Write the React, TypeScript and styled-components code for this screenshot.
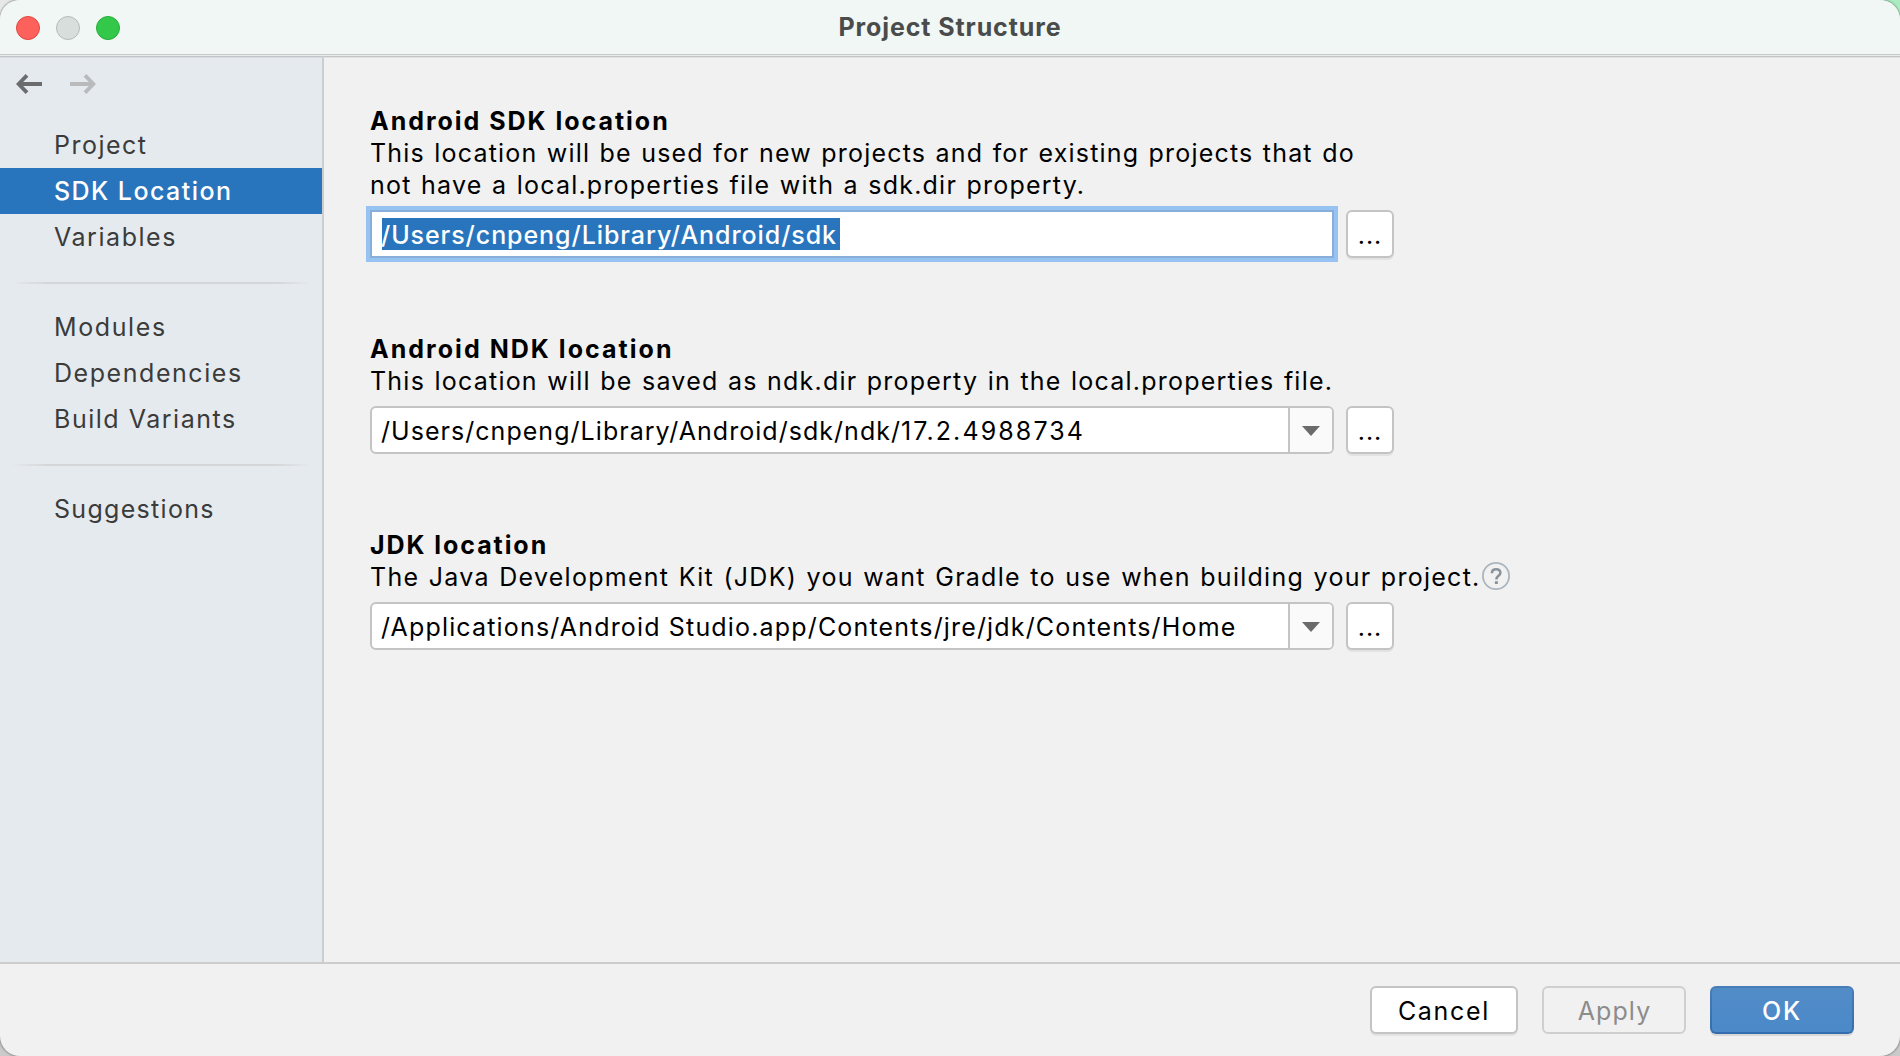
import React from "react";
import styled, { createGlobalStyle, css } from "styled-components";

const GlobalStyle = createGlobalStyle`
  *, *::before, *::after { box-sizing: border-box; }
  html, body { margin: 0; padding: 0; }
  body {
    overflow: hidden;
    background:
      radial-gradient(circle at 100% 0, #a9ecc0 0, #b4edc8 30px, transparent 31px),
      linear-gradient(#e6e8e7 0, #e6e8e7 50%, #cacaca 50%, #cacaca 100%);
  }
`;

const Window = styled.div`
  width: 1900px;
  height: 1056px;
  display: flex;
  flex-direction: column;
  overflow: hidden;
  border-radius: 20px;
  box-shadow: 0 0 2px 1px rgba(0, 0, 0, 0.3);
  background: #f1f1f1;
  color: #000;
  font-family: Inter, "Liberation Sans", sans-serif;
  font-size: 25px;
  line-height: 32px;
  white-space: nowrap;
`;

const TitleBar = styled.header`
  flex: none;
  height: 56px;
  display: grid;
  grid-template-columns: 1fr auto 1fr;
  align-items: center;
  padding: 0 16px 2px;
  background: linear-gradient(#f1f7f5 0 54px, #c5cbc9 54px 55px, #e9eceb 55px 56px);
`;

const Lights = styled.div`
  display: flex;
  gap: 16px;
  padding-top: 2px;
`;

const Light = styled.span<{ $fill: string; $edge: string }>`
  width: 24px;
  height: 24px;
  border-radius: 50%;
  background: ${(p) => p.$fill};
  border: 1px solid ${(p) => p.$edge};
`;

const Title = styled.h1`
  margin: 0;
  font-size: 25px;
  font-weight: 700;
  letter-spacing: 0.9px;
  color: #4a4b4b;
`;

const Body = styled.div`
  flex: 1;
  display: flex;
  min-height: 0;
  border-bottom: 2px solid #cdcdcd;
  background: linear-gradient(#c4c4c4 0 1px, #e2e2e2 1px 2px, transparent 2px);
`;

const Sidebar = styled.aside`
  width: 324px;
  flex: none;
  border-right: 2px solid #cdcdcd;
  background: linear-gradient(#c0c4c7 0 1px, #d9dde0 1px 2px, #e5eaee 2px);
`;

const History = styled.div`
  display: flex;
  gap: 28px;
  padding: 18px 16px 28px;
`;

const Nav = styled.nav`
  display: flex;
  flex-direction: column;
`;

const NavItem = styled.a<{ $selected?: boolean; $spacing: number }>`
  height: 46px;
  padding-left: 54px;
  line-height: 46px;
  letter-spacing: ${(p) => p.$spacing}px;
  color: #3b3b3b;
  ${(p) =>
    p.$selected &&
    css`
      background: #2975bd;
      color: #fff;
      font-weight: 500;
    `}
`;

const Divider = styled.hr`
  width: 300px;
  height: 2px;
  margin: 22px 0 20px 11px;
  border: 0;
  background: linear-gradient(90deg, transparent, #d5d6d7 12%, #d5d6d7 88%, transparent);
`;

const Content = styled.main`
  flex: 1;
  display: flex;
  flex-direction: column;
  gap: 75px;
  padding: 49px 0 0 46px;
`;

const Section = styled.section`
  display: flex;
  flex-direction: column;
`;

const Heading = styled.h2<{ $spacing: number }>`
  margin: 0;
  font-size: 25px;
  font-weight: 700;
  letter-spacing: ${(p) => p.$spacing}px;
`;

const Line = styled.p<{ $spacing: number }>`
  display: flex;
  height: 32px;
  margin: 0;
  letter-spacing: ${(p) => p.$spacing}px;
  word-spacing: 1.2px;
`;

const HelpBadge = styled.span`
  display: flex;
  margin: 1px 0 0 1px;
`;

const FieldRow = styled.div`
  display: flex;
  gap: 12px;
  margin-top: 9px;
`;

const Field = styled.div<{ $focused?: boolean }>`
  width: 964px;
  height: 48px;
  display: flex;
  border: 2px solid #c4c4c4;
  border-radius: 6px;
  background: #fff;
  overflow: hidden;
  ${(p) =>
    p.$focused &&
    css`
      border-color: #87afda;
      border-radius: 0;
      box-shadow: 0 0 0 4px #97c3f3;
    `}
`;

const Value = styled.span<{ $spacing: number; $highlighted?: boolean }>`
  height: 32px;
  margin: 6px 0 0 10px;
  line-height: 34px;
  letter-spacing: ${(p) => p.$spacing}px;
  text-indent: -1px;
  ${(p) =>
    p.$highlighted &&
    css`
      width: 458px;
      background: #2975bd;
      color: #fff;
      font-weight: 500;
    `}
`;

const Version = styled.span`
  letter-spacing: 2.1px;
`;

const DropButton = styled.span`
  width: 44px;
  margin-left: auto;
  display: flex;
  align-items: center;
  padding: 2px 0 0 12px;
  border-left: 2px solid #c4c4c4;
  background: #fafafa;
`;

const buttonBase = css`
  flex: none;
  height: 48px;
  padding: 0;
  border: 2px solid #c4c4c4;
  border-radius: 6px;
  background: #fff;
  box-shadow: 0 2px 0 rgba(0, 0, 0, 0.06);
  color: #000;
  font-family: inherit;
  font-size: 25px;
  line-height: 46px;
  text-align: center;
`;

const BrowseButton = styled.button`
  ${buttonBase}
  width: 48px;
  letter-spacing: 1px;
`;

const Footer = styled.footer`
  flex: none;
  height: 92px;
  display: flex;
  justify-content: flex-end;
  gap: 24px;
  padding: 22px 46px 0 0;
`;

const ActionButton = styled.button<{ $kind: "plain" | "disabled" | "primary"; $spacing: number }>`
  ${buttonBase}
  width: ${(p) => (p.$kind === "plain" ? 148 : 144)}px;
  letter-spacing: ${(p) => p.$spacing}px;
  ${(p) =>
    p.$kind === "disabled" &&
    css`
      border-color: #cfcfcf;
      background: #f1f1f1;
      box-shadow: none;
      color: #8c8c8c;
      padding-left: 1px;
    `}
  ${(p) =>
    p.$kind === "primary" &&
    css`
      border-color: transparent;
      background:
        linear-gradient(#528cc7, #4b89c9) padding-box,
        linear-gradient(#487eb8, #346dad) border-box;
      box-shadow: 0 2px 0 rgba(0, 0, 0, 0.1);
      color: #fff;
      font-weight: 500;
    `}
`;

const Arrow = ({ forward }: { forward?: boolean }) => (
  <svg width="26" height="20" viewBox="0 0 26 20" fill="none" stroke={forward ? "#b9babb" : "#6b6c6d"} strokeWidth="3.8">
    <g transform={forward ? "translate(26 0) scale(-1 1)" : undefined}>
      <path d="M26 10H3" />
      <path d="M11 1.4L2.6 10L11 18.6" />
    </g>
  </svg>
);

const Triangle = () => (
  <svg width="18" height="10" viewBox="0 0 18 10">
    <path d="M0 0H18L9 10Z" fill="#6b6b6b" />
  </svg>
);

const HelpIcon = () => (
  <svg width="28" height="28" viewBox="0 0 28 28" fill="none">
    <circle cx="14" cy="14" r="13.1" stroke="#abb6bf" strokeWidth="1.8" />
    <path d="M9.9 11.2C9.9 8.7 11.6 7.2 14.1 7.2C16.6 7.2 18.3 8.7 18.3 10.9C18.3 14 14.4 13.7 14.4 17.4" stroke="#88939c" strokeWidth="2.6" />
    <rect x="12.9" y="19.2" width="3" height="2.8" fill="#88939c" />
  </svg>
);

const PathField = ({ value, version, spacing }: { value: string; version?: string; spacing: number }) => (
  <FieldRow>
    <Field>
      <Value $spacing={spacing}>
        {value}
        {version && <Version>{version}</Version>}
      </Value>
      <DropButton>
        <Triangle />
      </DropButton>
    </Field>
    <BrowseButton>...</BrowseButton>
  </FieldRow>
);

export default function App() {
  return (
    <>
      <GlobalStyle />
      <Window>
        <TitleBar>
          <Lights>
            <Light $fill="#fd615c" $edge="#e2463f" />
            <Light $fill="#d8dedc" $edge="#b5bbb9" />
            <Light $fill="#34c84a" $edge="#25ac38" />
          </Lights>
          <Title>Project Structure</Title>
        </TitleBar>
        <Body>
          <Sidebar>
            <History>
              <Arrow />
              <Arrow forward />
            </History>
            <Nav>
              <NavItem $spacing={1.5}>Project</NavItem>
              <NavItem $spacing={1.45} $selected>SDK Location</NavItem>
              <NavItem $spacing={1.55}>Variables</NavItem>
              <Divider />
              <NavItem $spacing={1.6}>Modules</NavItem>
              <NavItem $spacing={1.55}>Dependencies</NavItem>
              <NavItem $spacing={1.52}>Build Variants</NavItem>
              <Divider />
              <NavItem $spacing={1.3}>Suggestions</NavItem>
            </Nav>
          </Sidebar>
          <Content>
            <Section>
              <Heading $spacing={1.98}>Android SDK location</Heading>
              <Line $spacing={1.181}>This location will be used for new projects and for existing projects that do</Line>
              <Line $spacing={1.22}>not have a local.properties file with a sdk.dir property.</Line>
              <FieldRow>
                <Field $focused>
                  <Value $spacing={0.93} $highlighted>/Users/cnpeng/Library/Android/sdk</Value>
                </Field>
                <BrowseButton>...</BrowseButton>
              </FieldRow>
            </Section>
            <Section>
              <Heading $spacing={2.04}>Android NDK location</Heading>
              <Line $spacing={1.22}>This location will be saved as ndk.dir property in the local.properties file.</Line>
              <PathField value="/Users/cnpeng/Library/Android/sdk/ndk/" version="17.2.4988734" spacing={1.04} />
            </Section>
            <Section>
              <Heading $spacing={1.93}>JDK location</Heading>
              <Line $spacing={1.265}>
                The Java Development Kit (JDK) you want Gradle to use when building your project.
                <HelpBadge>
                  <HelpIcon />
                </HelpBadge>
              </Line>
              <PathField value="/Applications/Android Studio.app/Contents/jre/jdk/Contents/Home" spacing={1.165} />
            </Section>
          </Content>
        </Body>
        <Footer>
          <ActionButton $kind="plain" $spacing={1.7}>Cancel</ActionButton>
          <ActionButton $kind="disabled" $spacing={1.1}>Apply</ActionButton>
          <ActionButton $kind="primary" $spacing={1.8}>OK</ActionButton>
        </Footer>
      </Window>
    </>
  );
}
